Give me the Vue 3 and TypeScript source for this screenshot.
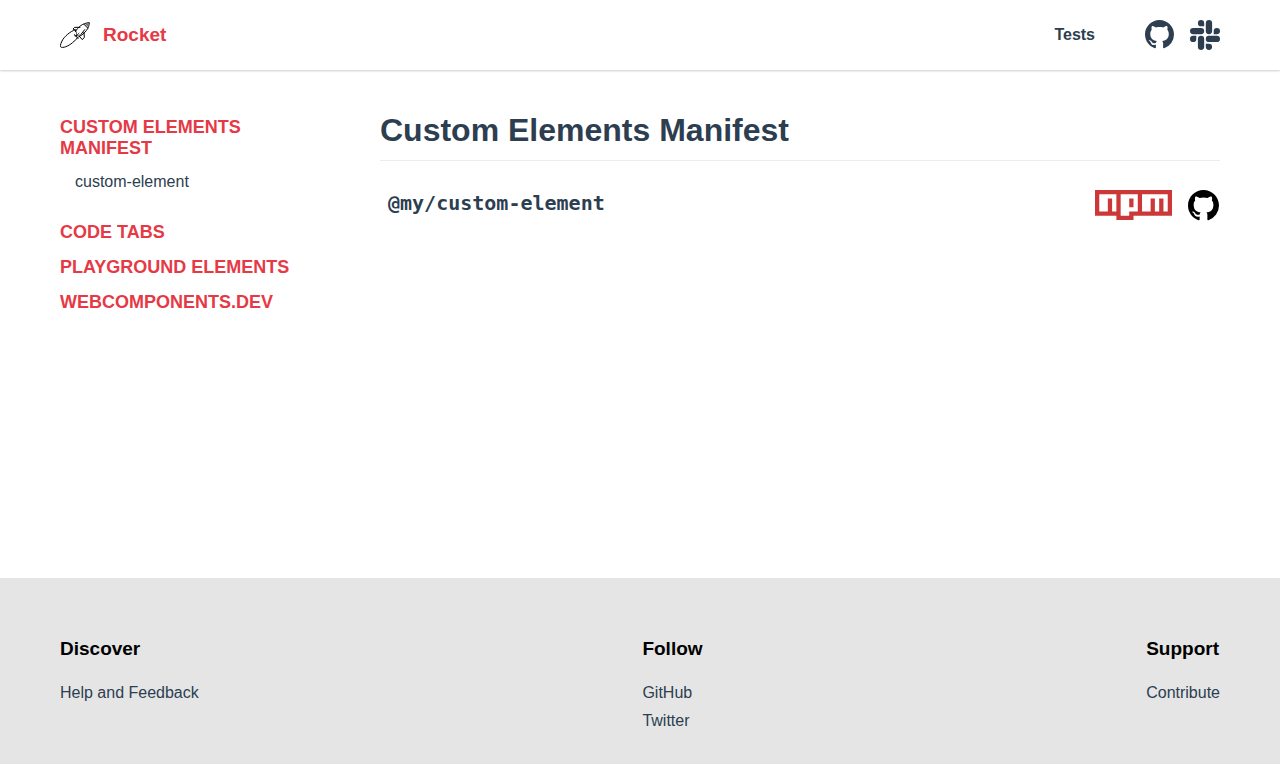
<script setup lang="ts">
interface NavSection {
  title: string
  children: string[]
}

interface FooterColumn {
  title: string
  links: string[]
}

const sections: NavSection[] = [
  { title: 'Custom Elements Manifest', children: ['custom-element'] },
  { title: 'Code Tabs', children: [] },
  { title: 'Playground Elements', children: [] },
  { title: 'WebComponents.dev', children: [] },
]

const footerColumns: FooterColumn[] = [
  { title: 'Discover', links: ['Help and Feedback'] },
  { title: 'Follow', links: ['GitHub', 'Twitter'] },
  { title: 'Support', links: ['Contribute'] },
]

const githubPath =
  'M8 0C3.58 0 0 3.58 0 8c0 3.54 2.29 6.53 5.47 7.59.4.07.55-.17.55-.38 0-.19-.01-.82-.01-1.49-2.01.37-2.53-.49-2.69-.94-.09-.23-.48-.94-.82-1.13-.28-.15-.68-.52-.01-.53.63-.01 1.08.58 1.23.82.72 1.21 1.87.87 2.33.66.07-.52.28-.87.51-1.07-1.78-.2-3.64-.89-3.64-3.95 0-.87.31-1.59.82-2.15-.08-.2-.36-1.02.08-2.12 0 0 .67-.21 2.2.82.64-.18 1.32-.27 2-.27s1.36.09 2 .27c1.53-1.04 2.2-.82 2.2-.82.44 1.1.16 1.92.08 2.12.51.56.82 1.27.82 2.15 0 3.07-1.87 3.75-3.65 3.95.29.25.54.73.54 1.48 0 1.07-.01 1.93-.01 2.2 0 .21.15.46.55.38A8.01 8.01 0 0 0 16 8c0-4.42-3.58-8-8-8z'
</script>

<template>
  <div class="page">
    <header class="header">
      <a class="brand" href="#">
        <svg class="brand-logo" viewBox="0 0 90 90" aria-hidden="true">
          <g fill="none" stroke="#000" stroke-width="3" stroke-linejoin="round" stroke-linecap="round">
            <path d="M46 29C31 34 13 49 6 63C0 75 0 81 4 82C14 84 31 75 42 64C49 58 53 54 56 50" />
            <path d="M46 35C54 21 68 9 88 8C88 24 74 42 58 49" />
            <path d="M60 22L44 22L39 27L48 32" />
            <path d="M72 37L73 52L67 59L58 49" />
            <path d="M72 13L83 24M63 43L74 29" />
            <path d="M43 43L55 55M46 50L57 39M49 36L51 56M43 47L60 45" stroke-width="2" />
          </g>
          <path d="M75 12L88 8L84 21Z" fill="#777" />
        </svg>
        <span>Rocket</span>
      </a>
      <nav class="top-nav" aria-label="Main">
        <a class="top-link" href="#">Tests</a>
        <div class="social">
          <a href="#" aria-label="GitHub">
            <svg class="icon icon-github" viewBox="0 0 16 16"><path :d="githubPath" /></svg>
          </a>
          <a href="#" aria-label="Slack">
            <svg class="icon" viewBox="0 0 24 24">
              <path d="M5.042 15.165a2.528 2.528 0 0 1-2.52 2.523A2.528 2.528 0 0 1 0 15.165a2.527 2.527 0 0 1 2.522-2.52h2.52v2.52zM6.313 15.165a2.527 2.527 0 0 1 2.521-2.52 2.527 2.527 0 0 1 2.521 2.52v6.313A2.528 2.528 0 0 1 8.834 24a2.528 2.528 0 0 1-2.521-2.522v-6.313zM8.834 5.042a2.528 2.528 0 0 1-2.521-2.52A2.528 2.528 0 0 1 8.834 0a2.528 2.528 0 0 1 2.521 2.522v2.52H8.834zM8.834 6.313a2.528 2.528 0 0 1 2.521 2.521 2.528 2.528 0 0 1-2.521 2.521H2.522A2.528 2.528 0 0 1 0 8.834a2.528 2.528 0 0 1 2.522-2.521h6.312zM18.956 8.834a2.528 2.528 0 0 1 2.522-2.521A2.528 2.528 0 0 1 24 8.834a2.528 2.528 0 0 1-2.522 2.521h-2.522V8.834zM17.688 8.834a2.528 2.528 0 0 1-2.523 2.521 2.527 2.527 0 0 1-2.52-2.521V2.522A2.527 2.527 0 0 1 15.165 0a2.528 2.528 0 0 1 2.523 2.522v6.312zM15.165 18.956a2.528 2.528 0 0 1 2.523 2.522A2.528 2.528 0 0 1 15.165 24a2.527 2.527 0 0 1-2.52-2.522v-2.522h2.52zM15.165 17.688a2.527 2.527 0 0 1-2.52-2.523 2.526 2.526 0 0 1 2.52-2.52h6.313A2.527 2.527 0 0 1 24 15.165a2.528 2.528 0 0 1-2.522 2.523h-6.313z" />
            </svg>
          </a>
        </div>
      </nav>
    </header>

    <div class="content">
      <nav class="sidebar" aria-label="Documentation">
        <ul class="sections">
          <li v-for="section in sections" :key="section.title">
            <a class="section-title" href="#">{{ section.title }}</a>
            <ul v-if="section.children.length" class="pages">
              <li v-for="child in section.children" :key="child">
                <a href="#">{{ child }}</a>
              </li>
            </ul>
          </li>
        </ul>
      </nav>

      <main class="main">
        <h1>Custom Elements Manifest</h1>
        <section class="package">
          <h2><code>@my/custom-element</code></h2>
          <div class="package-links">
            <a href="#" aria-label="npm">
              <svg class="npm" viewBox="0 0 18 7">
                <path fill="#cb3837" d="M0 0h18v6H9v1H5V6H0z" />
                <path fill="#fff" d="M1 5h2V2h1v3h1V1H1zM6 1v5h2V5h2V1zM8 2h1v2H8zM11 1v4h2V2h1v3h1V2h1v3h1V1z" fill-rule="evenodd" />
              </svg>
            </a>
            <a href="#" aria-label="GitHub repository">
              <svg class="repo" viewBox="0 0 16 16"><path :d="githubPath" /></svg>
            </a>
          </div>
        </section>
      </main>
    </div>

    <footer class="footer">
      <nav v-for="column in footerColumns" :key="column.title" :aria-label="column.title">
        <h3>{{ column.title }}</h3>
        <ul>
          <li v-for="link in column.links" :key="link">
            <a href="#">{{ link }}</a>
          </li>
        </ul>
      </nav>
    </footer>
  </div>
</template>

<style>
body {
  margin: 0;
  background: #fff;
}
</style>

<style scoped>
.page {
  display: flex;
  flex-direction: column;
  min-height: 100vh;
  color: #2c3e50;
  font-family: "Liberation Sans", Arial, sans-serif;
  font-size: 16px;
  line-height: 24px;
}

a {
  color: inherit;
  text-decoration: none;
}

ul {
  margin: 0;
  padding: 0;
  list-style: none;
}

svg {
  display: block;
}

.header {
  display: flex;
  align-items: center;
  justify-content: space-between;
  height: 70px;
  padding: 0 60px;
  box-shadow: 0 1px 2px rgba(0, 0, 0, 0.2);
}

.brand {
  display: flex;
  align-items: center;
  gap: 13px;
  color: #e63946;
  font-size: 19px;
  font-weight: bold;
}

.brand-logo {
  width: 30px;
  height: 30px;
}

.top-nav {
  display: flex;
  align-items: center;
  gap: 50px;
}

.top-link {
  font-weight: bold;
}

.social {
  display: flex;
  align-items: flex-start;
  gap: 16px;
}

.icon {
  width: 30px;
  height: 30px;
  fill: #2c3e50;
}

.icon-github {
  width: 29px;
  height: 29px;
}

.content {
  display: grid;
  flex: 1;
  grid-template-columns: 250px 1fr;
  gap: 70px;
  padding: 40px 60px;
}

.sidebar {
  padding-top: 7px;
}

.sections {
  display: flex;
  flex-direction: column;
  gap: 14px;
}

.section-title {
  display: block;
  color: #e63946;
  font-size: 18px;
  font-weight: bold;
  line-height: 21px;
  text-transform: uppercase;
}

.pages {
  padding: 11px 0 14px 15px;
}

h1 {
  margin: 0;
  padding-bottom: 10px;
  border-bottom: 1px solid #eaecef;
  font-size: 32px;
  line-height: 40px;
}

.package {
  display: flex;
  align-items: flex-start;
  justify-content: space-between;
  margin-top: 29px;
  padding-left: 8px;
}

h2 {
  margin: 0;
  font-size: 20px;
  line-height: 26px;
}

code {
  font-family: "DejaVu Sans Mono", "Liberation Mono", monospace;
}

.package-links {
  display: flex;
  gap: 15px;
}

.npm {
  width: 77px;
  height: 30px;
}

.repo {
  width: 33px;
  height: 31px;
}

.footer {
  display: flex;
  justify-content: space-between;
  padding: 60px 60px 29px;
  background: #e5e5e5;
}

h3 {
  margin: 0 0 19px;
  color: #000;
  font-size: 19px;
  line-height: 22px;
}

.footer li {
  line-height: 28px;
}
</style>
